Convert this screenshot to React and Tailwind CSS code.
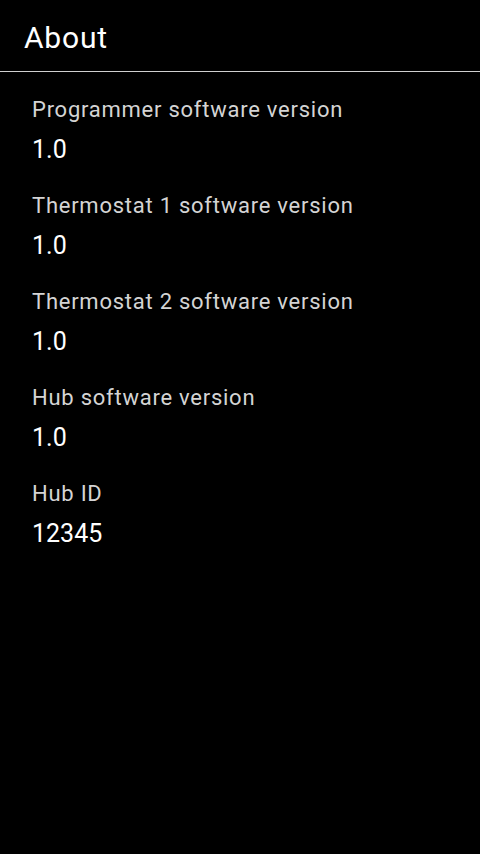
const items = [
  { label: "Programmer software version", value: "1.0" },
  { label: "Thermostat 1 software version", value: "1.0" },
  { label: "Thermostat 2 software version", value: "1.0" },
  { label: "Hub software version", value: "1.0" },
  { label: "Hub ID", value: "12345" },
];

export default function App() {
  return (
    <div className="min-h-[854px] w-full bg-black text-white" style={{ fontFamily: "Roboto, sans-serif" }}>
      <div className="h-[72px] border-b border-[#d0d0d0] pl-[24px] pt-[20px]">
        <h1 className="text-[30px] leading-[36px] font-normal tracking-[0.8px]">About</h1>
      </div>
      <div className="flex flex-col gap-[26px] pl-[32px] pt-[24px]">
        {items.map((item) => (
          <div key={item.label} className="flex flex-col">
            <div className="text-[22px] leading-[28px] tracking-[0.75px] text-[#d4d4d4]">{item.label}</div>
            <div className="mt-[10px] text-[25px] leading-[32px] text-white">{item.value}</div>
          </div>
        ))}
      </div>
    </div>
  );
}
